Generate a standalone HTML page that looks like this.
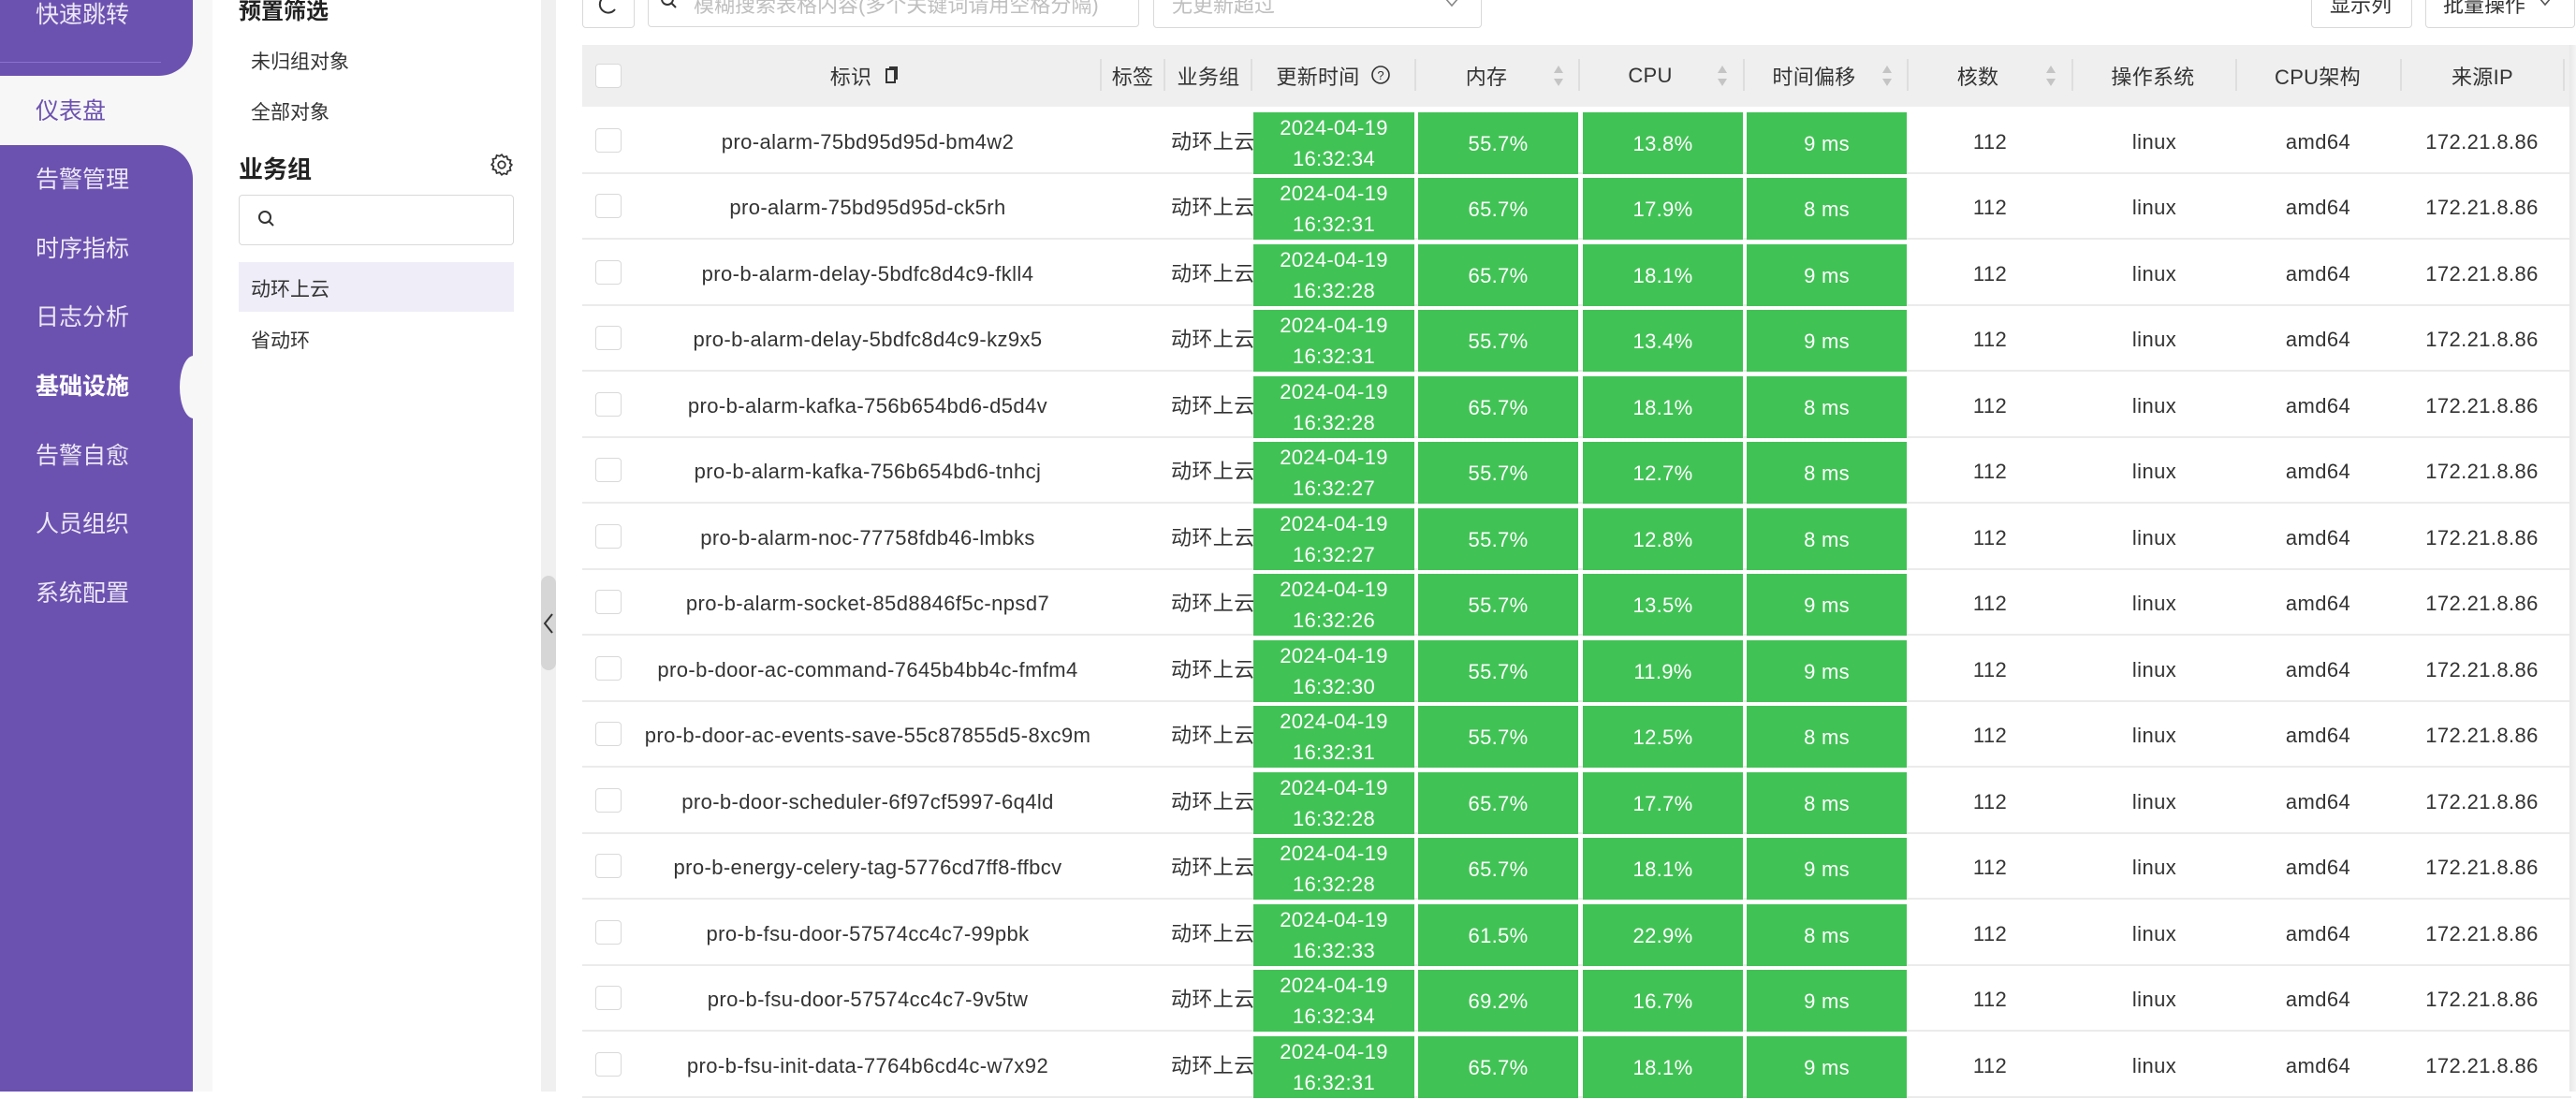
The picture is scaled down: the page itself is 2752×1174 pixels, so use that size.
<!DOCTYPE html>
<html><head><meta charset="utf-8">
<style>
*{margin:0;padding:0;box-sizing:border-box}
body{width:2752px;height:1166px;overflow:hidden;background:#fff;font-family:"Liberation Sans","Noto Sans CJK SC",sans-serif;position:relative;color:#333}
.abs{position:absolute}
.side{position:absolute;left:0;top:0;width:206px;height:1166px;background:#f7f7f7}
.pt{position:absolute;left:0;top:0;width:206px;height:81px;background:#6c52b0;border-bottom-right-radius:36px}
.pb{position:absolute;left:0;top:155px;width:206px;height:1011px;background:#6c52b0;border-top-right-radius:36px}
.notch{position:absolute;left:192px;top:380px;width:30px;height:67px;background:#f7f7f7;border-radius:50% 0 0 50%/50%}
.ni{position:absolute;left:38px;font-size:25px;color:#ece8f6;line-height:30px}
.gap{position:absolute;left:206px;top:0;width:21px;height:1166px;background:#f7f7f7}
.panel{position:absolute;left:227px;top:0;width:351px;height:1166px;background:#fff}
.div{position:absolute;left:578px;top:0;width:16px;height:1166px;background:#f0f0f0}
.handle{position:absolute;left:578px;top:615px;width:16px;height:101px;background:#d6d6d6;border-radius:8px}
.box{position:absolute;border:1px solid #d9d9d9;border-radius:4px;background:#fff}
.ph{position:absolute;color:#bfbfbf;font-size:22px}
.hdr{position:absolute;left:622px;top:48px;width:2125px;height:66px;background:#efefef}
.ht{position:absolute;top:81px;transform:translate(-50%,-50%);font-size:22px;color:#333;white-space:nowrap;letter-spacing:.3px}
.sep{position:absolute;top:63px;width:2px;height:34px;background:#dedede}
.row{position:absolute;left:622px;width:2125px;height:71px;border-bottom:2px solid #ebebeb}
.cb{position:absolute;left:14px;top:22px;width:28px;height:26px;border:1px solid #d9d9d9;border-radius:4px;background:#fff}
.c{position:absolute;top:2px;height:70px;line-height:70px;text-align:center;font-size:22px;color:#333;white-space:nowrap;letter-spacing:.4px}
.g{position:absolute;top:5px;height:66px;background:#41c255;color:#fff;text-align:center;font-size:22px;display:flex;align-items:center;justify-content:center;line-height:33px;letter-spacing:.3px}
.arr{position:absolute;top:68px;width:12px;height:26px}
</style></head><body>
<div class="side"></div>
<div class="pt"></div>
<div class="abs" style="left:0;top:66px;width:172px;height:1px;background:#8a70d0"></div>
<div class="pb"></div>
<div class="notch"></div>
<div class="ni" style="top:1px">快速跳转</div>
<div class="ni" style="top:104px;color:#6c52b0">仪表盘</div>
<div class="ni" style="top:177px">告警管理</div>
<div class="ni" style="top:251px">时序指标</div>
<div class="ni" style="top:324px">日志分析</div>
<div class="ni" style="top:398px;color:#fff;font-weight:bold">基础设施</div>
<div class="ni" style="top:472px">告警自愈</div>
<div class="ni" style="top:545px">人员组织</div>
<div class="ni" style="top:619px">系统配置</div>
<div class="gap"></div>
<div class="panel"></div>
<div class="div"></div>
<div class="handle"></div>
<svg class="abs" style="left:580px;top:654px" width="12" height="24" viewBox="0 0 12 24"><path d="M10 2 L2 12 L10 22" stroke="#333" stroke-width="2" fill="none"/></svg>
<div class="abs" style="left:255px;top:-8px;font-size:24px;font-weight:bold;color:#222">预置筛选</div>
<div class="abs" style="left:268px;top:50px;font-size:21px;color:#333">未归组对象</div>
<div class="abs" style="left:268px;top:104px;font-size:21px;color:#333">全部对象</div>
<div class="abs" style="left:255px;top:161px;font-size:26px;font-weight:bold;color:#222">业务组</div>
<svg class="abs" style="left:523px;top:163px" width="26" height="26" viewBox="0 0 24 24"><path d="M12 2l2 2.5 3-.8.8 3 3 .8-.8 3L22 12l-2 2.5.8 3-3 .8-.8 3-3-.8L12 22l-2-2.5-3 .8-.8-3-3-.8.8-3L2 12l2-2.5-.8-3 3-.8.8-3 3 .8z" fill="none" stroke="#333" stroke-width="1.6"/><circle cx="12" cy="12" r="3.5" fill="none" stroke="#333" stroke-width="1.6"/></svg>
<div class="box" style="left:255px;top:208px;width:294px;height:54px"></div>
<svg class="abs" style="left:274px;top:223px" width="22" height="22" viewBox="0 0 22 22"><circle cx="9" cy="9" r="6" fill="none" stroke="#333" stroke-width="2"/><path d="M13 13l5 5" stroke="#333" stroke-width="2"/></svg>
<div class="abs" style="left:255px;top:280px;width:294px;height:53px;background:#efedf8"></div>
<div class="abs" style="left:268px;top:293px;font-size:21px;color:#333">动环上云</div>
<div class="abs" style="left:268px;top:348px;font-size:21px;color:#333">省动环</div>

<div class="box" style="left:622px;top:-26px;width:56px;height:56px"></div>
<svg class="abs" style="left:636px;top:-6px" width="28" height="24" viewBox="0 0 28 24"><path d="M20 4 A9 9 0 1 0 21 16" fill="none" stroke="#333" stroke-width="2"/></svg>
<div class="box" style="left:692px;top:-26px;width:525px;height:55px"></div>
<svg class="abs" style="left:704px;top:-8px" width="22" height="22" viewBox="0 0 22 22"><circle cx="9" cy="7" r="6" fill="none" stroke="#333" stroke-width="2"/><path d="M13 11l5 5" stroke="#333" stroke-width="2"/></svg>
<div class="ph" style="left:741px;top:-12px">模糊搜索表格内容(多个关键词请用空格分隔)</div>
<div class="box" style="left:1232px;top:-26px;width:351px;height:56px"></div>
<div class="ph" style="left:1252px;top:-12px">无更新超过</div>
<svg class="abs" style="left:1542px;top:-4px" width="18" height="12" viewBox="0 0 18 12"><path d="M2 2l7 8 7-8" fill="none" stroke="#888" stroke-width="1.6"/></svg>
<div class="box" style="left:2469px;top:-26px;width:108px;height:56px"></div>
<div class="abs" style="left:2489px;top:-12px;font-size:22px;color:#333">显示列</div>
<div class="box" style="left:2591px;top:-26px;width:160px;height:56px"></div>
<div class="abs" style="left:2610px;top:-12px;font-size:22px;color:#333">批量操作</div>
<svg class="abs" style="left:2711px;top:-4px" width="16" height="12" viewBox="0 0 16 12"><path d="M2 2l6 7 6-7" fill="none" stroke="#555" stroke-width="1.6"/></svg>

<div class="hdr"><div class="cb" style="top:20px"></div></div>
<div class="sep" style="left:1175px"></div><div class="sep" style="left:1243px"></div><div class="sep" style="left:1336px"></div><div class="sep" style="left:1511px"></div><div class="sep" style="left:1686px"></div><div class="sep" style="left:1862px"></div><div class="sep" style="left:2037px"></div><div class="sep" style="left:2213px"></div><div class="sep" style="left:2388px"></div><div class="sep" style="left:2564px"></div><div class="sep" style="left:2738px"></div>
<div class="ht" style="left:909px">标识</div>
<svg class="abs" style="left:945px;top:69px" width="16" height="22" viewBox="0 0 16 22"><rect x="2" y="5" width="9" height="14" fill="none" stroke="#333" stroke-width="2"/><path d="M5 3h8v13" fill="none" stroke="#333" stroke-width="2"/></svg>
<div class="ht" style="left:1210px">标签</div>
<div class="ht" style="left:1291px">业务组</div>
<div class="ht" style="left:1408px">更新时间</div>
<svg class="abs" style="left:1464px;top:69px" width="22" height="22" viewBox="0 0 22 22"><circle cx="11" cy="11" r="9" fill="none" stroke="#333" stroke-width="1.6"/><text x="11" y="16" font-size="13" text-anchor="middle" fill="#333" font-family="Liberation Sans">?</text></svg>
<div class="ht" style="left:1588px">内存</div>
<div class="ht" style="left:1763px">CPU</div>
<div class="ht" style="left:1938px">时间偏移</div>
<div class="ht" style="left:2113px">核数</div>
<div class="ht" style="left:2300px">操作系统</div>
<div class="ht" style="left:2476px">CPU架构</div>
<div class="ht" style="left:2652px">来源IP</div>
<svg class="arr" style="left:1659px" viewBox="0 0 12 26"><path d="M6 2l5 8H1zM6 24l5-8H1z" fill="#c4c4c4"/></svg>
<svg class="arr" style="left:1834px" viewBox="0 0 12 26"><path d="M6 2l5 8H1zM6 24l5-8H1z" fill="#c4c4c4"/></svg>
<svg class="arr" style="left:2010px" viewBox="0 0 12 26"><path d="M6 2l5 8H1zM6 24l5-8H1z" fill="#c4c4c4"/></svg>
<svg class="arr" style="left:2185px" viewBox="0 0 12 26"><path d="M6 2l5 8H1zM6 24l5-8H1z" fill="#c4c4c4"/></svg>

<div class="row" style="top:115px"><div class="cb"></div><div class="c" style="left:50px;width:510px">pro-alarm-75bd95d95d-bm4w2</div><div class="c" style="left:629px">动环上云</div><div class="g" style="left:717px;width:172px">2024-04-19<br>16:32:34</div><div class="g" style="left:893px;width:171px">55.7%</div><div class="g" style="left:1069px;width:171px">13.8%</div><div class="g" style="left:1244px;width:171px">9 ms</div><div class="c" style="left:1416px;width:176px">112</div><div class="c" style="left:1592px;width:175px">linux</div><div class="c" style="left:1767px;width:175px">amd64</div><div class="c" style="left:1942px;width:175px">172.21.8.86</div></div>
<div class="row" style="top:185px"><div class="cb"></div><div class="c" style="left:50px;width:510px">pro-alarm-75bd95d95d-ck5rh</div><div class="c" style="left:629px">动环上云</div><div class="g" style="left:717px;width:172px">2024-04-19<br>16:32:31</div><div class="g" style="left:893px;width:171px">65.7%</div><div class="g" style="left:1069px;width:171px">17.9%</div><div class="g" style="left:1244px;width:171px">8 ms</div><div class="c" style="left:1416px;width:176px">112</div><div class="c" style="left:1592px;width:175px">linux</div><div class="c" style="left:1767px;width:175px">amd64</div><div class="c" style="left:1942px;width:175px">172.21.8.86</div></div>
<div class="row" style="top:256px"><div class="cb"></div><div class="c" style="left:50px;width:510px">pro-b-alarm-delay-5bdfc8d4c9-fkll4</div><div class="c" style="left:629px">动环上云</div><div class="g" style="left:717px;width:172px">2024-04-19<br>16:32:28</div><div class="g" style="left:893px;width:171px">65.7%</div><div class="g" style="left:1069px;width:171px">18.1%</div><div class="g" style="left:1244px;width:171px">9 ms</div><div class="c" style="left:1416px;width:176px">112</div><div class="c" style="left:1592px;width:175px">linux</div><div class="c" style="left:1767px;width:175px">amd64</div><div class="c" style="left:1942px;width:175px">172.21.8.86</div></div>
<div class="row" style="top:326px"><div class="cb"></div><div class="c" style="left:50px;width:510px">pro-b-alarm-delay-5bdfc8d4c9-kz9x5</div><div class="c" style="left:629px">动环上云</div><div class="g" style="left:717px;width:172px">2024-04-19<br>16:32:31</div><div class="g" style="left:893px;width:171px">55.7%</div><div class="g" style="left:1069px;width:171px">13.4%</div><div class="g" style="left:1244px;width:171px">9 ms</div><div class="c" style="left:1416px;width:176px">112</div><div class="c" style="left:1592px;width:175px">linux</div><div class="c" style="left:1767px;width:175px">amd64</div><div class="c" style="left:1942px;width:175px">172.21.8.86</div></div>
<div class="row" style="top:397px"><div class="cb"></div><div class="c" style="left:50px;width:510px">pro-b-alarm-kafka-756b654bd6-d5d4v</div><div class="c" style="left:629px">动环上云</div><div class="g" style="left:717px;width:172px">2024-04-19<br>16:32:28</div><div class="g" style="left:893px;width:171px">65.7%</div><div class="g" style="left:1069px;width:171px">18.1%</div><div class="g" style="left:1244px;width:171px">8 ms</div><div class="c" style="left:1416px;width:176px">112</div><div class="c" style="left:1592px;width:175px">linux</div><div class="c" style="left:1767px;width:175px">amd64</div><div class="c" style="left:1942px;width:175px">172.21.8.86</div></div>
<div class="row" style="top:467px"><div class="cb"></div><div class="c" style="left:50px;width:510px">pro-b-alarm-kafka-756b654bd6-tnhcj</div><div class="c" style="left:629px">动环上云</div><div class="g" style="left:717px;width:172px">2024-04-19<br>16:32:27</div><div class="g" style="left:893px;width:171px">55.7%</div><div class="g" style="left:1069px;width:171px">12.7%</div><div class="g" style="left:1244px;width:171px">8 ms</div><div class="c" style="left:1416px;width:176px">112</div><div class="c" style="left:1592px;width:175px">linux</div><div class="c" style="left:1767px;width:175px">amd64</div><div class="c" style="left:1942px;width:175px">172.21.8.86</div></div>
<div class="row" style="top:538px"><div class="cb"></div><div class="c" style="left:50px;width:510px">pro-b-alarm-noc-77758fdb46-lmbks</div><div class="c" style="left:629px">动环上云</div><div class="g" style="left:717px;width:172px">2024-04-19<br>16:32:27</div><div class="g" style="left:893px;width:171px">55.7%</div><div class="g" style="left:1069px;width:171px">12.8%</div><div class="g" style="left:1244px;width:171px">8 ms</div><div class="c" style="left:1416px;width:176px">112</div><div class="c" style="left:1592px;width:175px">linux</div><div class="c" style="left:1767px;width:175px">amd64</div><div class="c" style="left:1942px;width:175px">172.21.8.86</div></div>
<div class="row" style="top:608px"><div class="cb"></div><div class="c" style="left:50px;width:510px">pro-b-alarm-socket-85d8846f5c-npsd7</div><div class="c" style="left:629px">动环上云</div><div class="g" style="left:717px;width:172px">2024-04-19<br>16:32:26</div><div class="g" style="left:893px;width:171px">55.7%</div><div class="g" style="left:1069px;width:171px">13.5%</div><div class="g" style="left:1244px;width:171px">9 ms</div><div class="c" style="left:1416px;width:176px">112</div><div class="c" style="left:1592px;width:175px">linux</div><div class="c" style="left:1767px;width:175px">amd64</div><div class="c" style="left:1942px;width:175px">172.21.8.86</div></div>
<div class="row" style="top:679px"><div class="cb"></div><div class="c" style="left:50px;width:510px">pro-b-door-ac-command-7645b4bb4c-fmfm4</div><div class="c" style="left:629px">动环上云</div><div class="g" style="left:717px;width:172px">2024-04-19<br>16:32:30</div><div class="g" style="left:893px;width:171px">55.7%</div><div class="g" style="left:1069px;width:171px">11.9%</div><div class="g" style="left:1244px;width:171px">9 ms</div><div class="c" style="left:1416px;width:176px">112</div><div class="c" style="left:1592px;width:175px">linux</div><div class="c" style="left:1767px;width:175px">amd64</div><div class="c" style="left:1942px;width:175px">172.21.8.86</div></div>
<div class="row" style="top:749px"><div class="cb"></div><div class="c" style="left:50px;width:510px">pro-b-door-ac-events-save-55c87855d5-8xc9m</div><div class="c" style="left:629px">动环上云</div><div class="g" style="left:717px;width:172px">2024-04-19<br>16:32:31</div><div class="g" style="left:893px;width:171px">55.7%</div><div class="g" style="left:1069px;width:171px">12.5%</div><div class="g" style="left:1244px;width:171px">8 ms</div><div class="c" style="left:1416px;width:176px">112</div><div class="c" style="left:1592px;width:175px">linux</div><div class="c" style="left:1767px;width:175px">amd64</div><div class="c" style="left:1942px;width:175px">172.21.8.86</div></div>
<div class="row" style="top:820px"><div class="cb"></div><div class="c" style="left:50px;width:510px">pro-b-door-scheduler-6f97cf5997-6q4ld</div><div class="c" style="left:629px">动环上云</div><div class="g" style="left:717px;width:172px">2024-04-19<br>16:32:28</div><div class="g" style="left:893px;width:171px">65.7%</div><div class="g" style="left:1069px;width:171px">17.7%</div><div class="g" style="left:1244px;width:171px">8 ms</div><div class="c" style="left:1416px;width:176px">112</div><div class="c" style="left:1592px;width:175px">linux</div><div class="c" style="left:1767px;width:175px">amd64</div><div class="c" style="left:1942px;width:175px">172.21.8.86</div></div>
<div class="row" style="top:890px"><div class="cb"></div><div class="c" style="left:50px;width:510px">pro-b-energy-celery-tag-5776cd7ff8-ffbcv</div><div class="c" style="left:629px">动环上云</div><div class="g" style="left:717px;width:172px">2024-04-19<br>16:32:28</div><div class="g" style="left:893px;width:171px">65.7%</div><div class="g" style="left:1069px;width:171px">18.1%</div><div class="g" style="left:1244px;width:171px">9 ms</div><div class="c" style="left:1416px;width:176px">112</div><div class="c" style="left:1592px;width:175px">linux</div><div class="c" style="left:1767px;width:175px">amd64</div><div class="c" style="left:1942px;width:175px">172.21.8.86</div></div>
<div class="row" style="top:961px"><div class="cb"></div><div class="c" style="left:50px;width:510px">pro-b-fsu-door-57574cc4c7-99pbk</div><div class="c" style="left:629px">动环上云</div><div class="g" style="left:717px;width:172px">2024-04-19<br>16:32:33</div><div class="g" style="left:893px;width:171px">61.5%</div><div class="g" style="left:1069px;width:171px">22.9%</div><div class="g" style="left:1244px;width:171px">8 ms</div><div class="c" style="left:1416px;width:176px">112</div><div class="c" style="left:1592px;width:175px">linux</div><div class="c" style="left:1767px;width:175px">amd64</div><div class="c" style="left:1942px;width:175px">172.21.8.86</div></div>
<div class="row" style="top:1031px"><div class="cb"></div><div class="c" style="left:50px;width:510px">pro-b-fsu-door-57574cc4c7-9v5tw</div><div class="c" style="left:629px">动环上云</div><div class="g" style="left:717px;width:172px">2024-04-19<br>16:32:34</div><div class="g" style="left:893px;width:171px">69.2%</div><div class="g" style="left:1069px;width:171px">16.7%</div><div class="g" style="left:1244px;width:171px">9 ms</div><div class="c" style="left:1416px;width:176px">112</div><div class="c" style="left:1592px;width:175px">linux</div><div class="c" style="left:1767px;width:175px">amd64</div><div class="c" style="left:1942px;width:175px">172.21.8.86</div></div>
<div class="row" style="top:1102px"><div class="cb"></div><div class="c" style="left:50px;width:510px">pro-b-fsu-init-data-7764b6cd4c-w7x92</div><div class="c" style="left:629px">动环上云</div><div class="g" style="left:717px;width:172px">2024-04-19<br>16:32:31</div><div class="g" style="left:893px;width:171px">65.7%</div><div class="g" style="left:1069px;width:171px">18.1%</div><div class="g" style="left:1244px;width:171px">9 ms</div><div class="c" style="left:1416px;width:176px">112</div><div class="c" style="left:1592px;width:175px">linux</div><div class="c" style="left:1767px;width:175px">amd64</div><div class="c" style="left:1942px;width:175px">172.21.8.86</div></div>
<div class="abs" style="left:2745px;top:48px;width:7px;height:1118px;background:linear-gradient(to right,#e8e8e8,#f5f5f5)"></div>
</body></html>
